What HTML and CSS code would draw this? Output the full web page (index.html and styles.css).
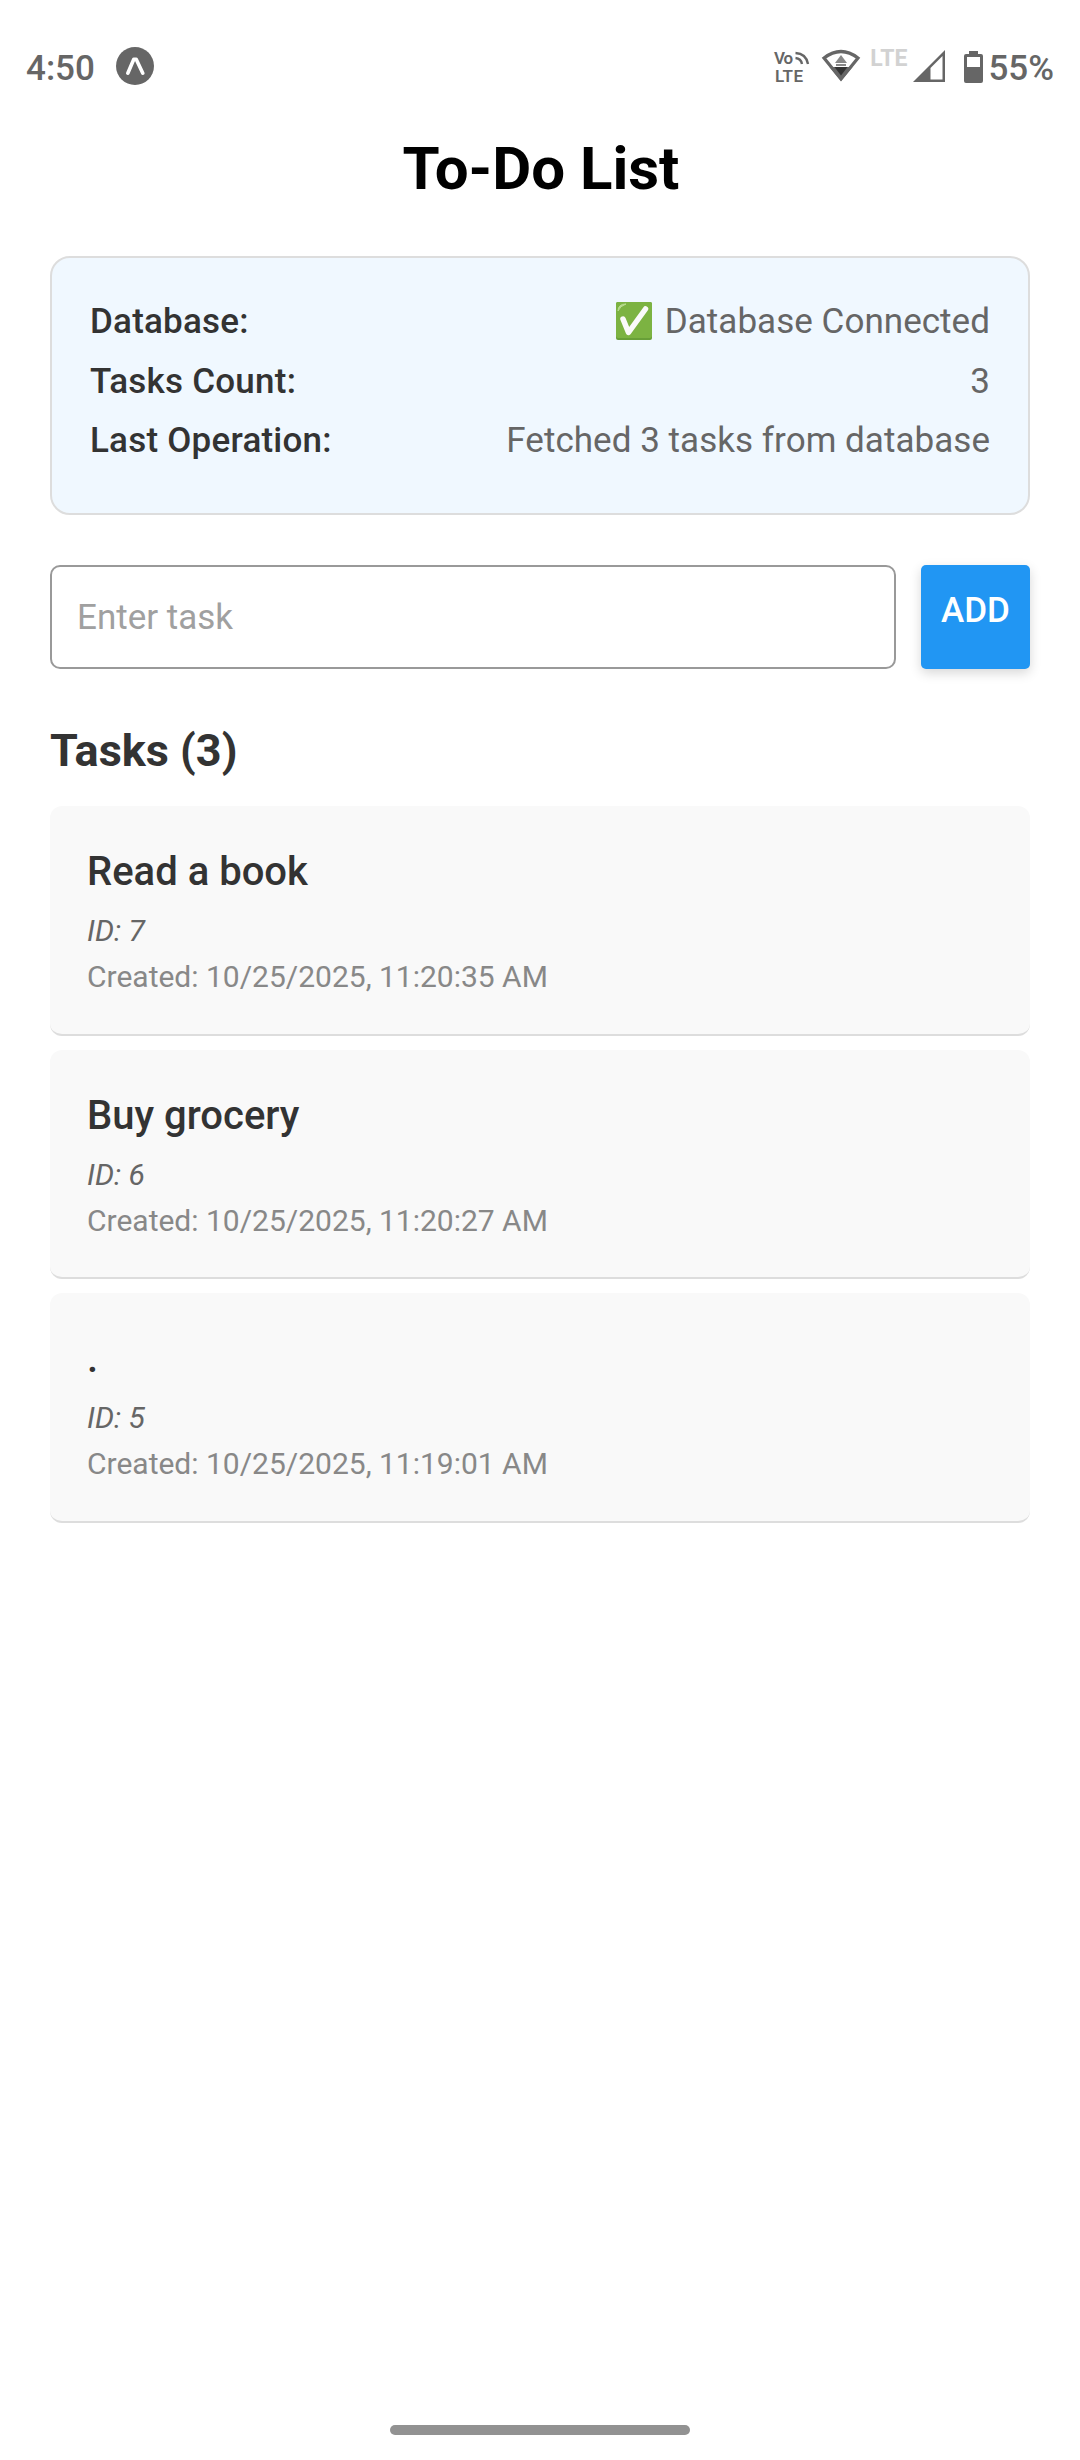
FILE: index.html
```html
<!DOCTYPE html>
<html lang="en">
<head>
<meta charset="utf-8">
<title>To-Do List</title>
<link rel="stylesheet" href="styles.css">
</head>
<body>
<div class="screen">
  <header class="statusbar">
    <div class="status-left">
      <span class="clock">4:50</span>
      <svg class="expo" viewBox="0 0 38 38"><circle cx="19" cy="19" r="19" fill="#666"/><path d="M11.8 26.2 17.8 12.2H20.2L26.8 26.2" fill="none" stroke="#fff" stroke-width="3.6" stroke-linecap="round" stroke-linejoin="round"/></svg>
    </div>
    <div class="status-right">
      <svg class="volte" viewBox="0 0 36 36">
        <text class="volte-text" x="0" y="15" textLength="19">Vo</text>
        <text class="volte-text" x="1" y="32.500" textLength="28">LTE</text>
        <path d="M21.500 9Q27 9.500 28 15M21.500 4Q32 4.500 34 15" fill="none" stroke="#666" stroke-width="2.400"/>
      </svg>
      <svg class="wifi" viewBox="0 0 38 32"><path d="M2 8Q19-5 36 8L19 29Z" fill="none" stroke="#666" stroke-width="3.2"/><path d="M7.500 17H30.500L19 31Z" fill="#666"/><path d="M19 5 25 13H13Z" fill="#888"/><path d="M14 14H24V16H14Z" fill="#888"/><path d="M12.500 17H25.500L19 25.500Z" fill="#333"/></svg>
      <span class="lte">LTE</span>
      <svg class="signal" viewBox="0 0 32 32"><path d="M32 0V32H0Z" fill="#666"/><path d="M29.500 6V29.500H17.500V18Z" fill="#fff"/></svg>
      <svg class="battery" viewBox="0 0 19 32"><path d="M5 0H14V3H17Q19 3 19 5V30Q19 32 17 32H2Q0 32 0 30V5Q0 3 2 3H5Z" fill="#666"/><path d="M3 6H16V16H3Z" fill="#fff"/></svg>
      <span class="percent">55%</span>
    </div>
  </header>

  <main class="content">
    <h1 class="title">To-Do List</h1>

    <section class="info">
      <div class="info-row"><span class="info-label">Database:</span><span class="info-value"><svg class="check" viewBox="0 0 38 40"><rect x="1" y="1" width="36" height="38" rx="2" fill="#689f38"/><rect x="1" y="1" width="36" height="36" rx="2" fill="#7cb342"/><path d="M3 10Q3 3 11 3Q5 5 3 10Z" fill="#b9dc90" stroke="#b9dc90"/><path d="M8 18 13.500 31.500 30.500 8" fill="none" stroke="#fafafa" stroke-width="5.500" stroke-linecap="round" stroke-linejoin="round"/></svg>Database Connected</span></div>
      <div class="info-row"><span class="info-label">Tasks Count:</span><span class="info-value">3</span></div>
      <div class="info-row"><span class="info-label">Last Operation:</span><span class="info-value">Fetched 3 tasks from database</span></div>
    </section>

    <form class="entry">
      <input class="entry-input" type="text" placeholder="Enter task">
      <button class="entry-add" type="button">ADD</button>
    </form>

    <h2 class="subtitle">Tasks (3)</h2>
    <ul class="tasks">
      <li class="task"><div class="task-name">Read a book</div><div class="task-id">ID: 7</div><div class="task-date">Created: 10/25/2025, 11:20:35 AM</div></li>
      <li class="task"><div class="task-name">Buy grocery</div><div class="task-id">ID: 6</div><div class="task-date">Created: 10/25/2025, 11:20:27 AM</div></li>
      <li class="task"><div class="task-name">.</div><div class="task-id">ID: 5</div><div class="task-date">Created: 10/25/2025, 11:19:01 AM</div></li>
    </ul>
  </main>
  <div class="home-bar"></div>
</div>
</body>
</html>
```
FILE: styles.css
```css
* { box-sizing: border-box; }
body { margin: 0; background: #fff; font-family: Roboto, "Liberation Sans", sans-serif; color: #333; }
svg { display: block; flex: none; overflow: visible; }
.screen { width: 1080px; height: 2460px; display: flex; flex-direction: column; align-items: center; background: #fff; overflow: hidden; }

.statusbar { width: 100%; height: 132px; padding: 0 26px; display: flex; justify-content: space-between; align-items: flex-start; color: #666; font-weight: 500; }
.status-left, .status-right { display: flex; align-items: flex-start; }
.clock, .percent { font-size: 35px; line-height: 40px; margin-top: 49px; font-weight: 500; }
.expo { width: 38px; height: 38px; margin: 47px 0 0 21px; }
.volte { width: 36px; height: 36px; margin-top: 49px; }
.volte-text { font-family: Roboto, sans-serif; font-size: 17px; font-weight: 600; fill: #666; }
.wifi { width: 38px; height: 32px; margin: 50px 0 0 12px; }
.lte { font-size: 23px; line-height: 26px; font-weight: 700; color: #d2d2d2; margin: 46px 0 0 10px; }
.signal { width: 32px; height: 32px; margin: 50px 0 0 6px; }
.battery { width: 19px; height: 32px; margin: 51px 5px 0 19px; }

.content { width: 980px; flex: 1; display: flex; flex-direction: column; }
.title { margin: 0; height: 124px; padding: 1px 0 0 2px; font-size: 60px; line-height: 72px; font-weight: 700; text-align: center; color: #000; }

.info { height: 259px; padding: 40px 38px 0; border: 2.500px solid #ddd; border-radius: 20px; background: #f0f8ff; font-size: 35px; line-height: 47px; }
.info-row { display: flex; justify-content: space-between; height: 59.500px; }
.info-label { font-weight: 500; letter-spacing: .22px; color: #333; }
.info-value { display: flex; letter-spacing: .04px; color: #666; }
.check { width: 38px; height: 40px; margin: 3px 12px 0 0; }

.entry { display: flex; gap: 25px; height: 104px; margin: 50px 0 0; }
.entry-input { flex: 1; min-width: 0; border: 2.500px solid #999; border-radius: 10px; padding: 0 25px; font: 35px Roboto, sans-serif; background: #fff; outline: none; }
.entry-input::placeholder { color: #a0a0a0; opacity: 1; }
.entry-add { width: 109px; border: 0; border-radius: 5px; padding: 0 0 14px; background: #2196f3; color: #fff; font: 500 35px Roboto, sans-serif; box-shadow: 0 4px 12px rgba(0,0,0,.16); }

.subtitle { margin: 55px 0 0; height: 82px; font-size: 45px; line-height: 54px; font-weight: 700; }
.tasks { list-style: none; margin: 0; padding: 0; display: flex; flex-direction: column; gap: 14px; }
.task { height: 229.500px; padding: 39px 37px 0; background: #f9f9f9; border-radius: 12px; border-bottom: 2.500px solid #ddd; }
.task-name { font-size: 40px; line-height: 54px; height: 66px; font-weight: 500; }
.task-id { font-size: 30px; line-height: 40px; height: 46px; font-style: italic; color: #666; }
.task-date { font-size: 30px; line-height: 40px; color: #888; }

.home-bar { width: 300px; height: 10px; border-radius: 5px; background: #929292; margin-bottom: 25px; }
```
